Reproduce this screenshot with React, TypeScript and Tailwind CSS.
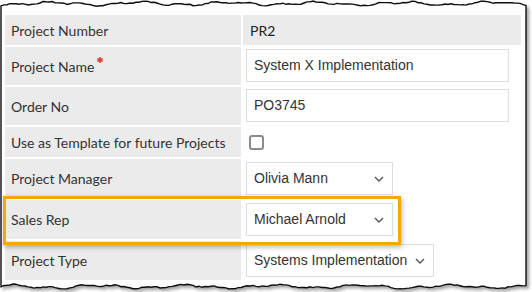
import React from "react";

const rand = (i: number, seed: number) => {
  const v = Math.sin(i * 12.9898 + seed * 78.233) * 43758.5453;
  return v - Math.floor(v);
};

const edgeY = (x: number, base: number, seed: number) =>
  base + 1.3 * Math.sin(x / 14 + seed) + 0.9 * Math.sin(x / 5.3 + seed * 2) + rand(x, seed) * 1.2;

const framePath = () => {
  const top: string[] = [];
  const bottom: string[] = [];
  for (let x = 1; x <= 526; x += 3) {
    top.push(`${x},${edgeY(x, 3, 1).toFixed(1)}`);
    bottom.push(`${x},${edgeY(x, 286, 4).toFixed(1)}`);
  }
  top.push(`526,${edgeY(526, 3, 1).toFixed(1)}`);
  bottom.push(`526,285`);
  return `M${top.join(" L")} L${bottom.reverse().join(" L")} Z`;
};

const Chevron = () => (
  <svg width="10" height="6" viewBox="0 0 10 6" className="shrink-0">
    <polyline points="1,1 5,5 9,1" fill="none" stroke="#555" strokeWidth="1.4" />
  </svg>
);

const Required = () => (
  <svg width="6" height="6" viewBox="0 0 6 6" className="ml-[3px] -mt-[12px]">
    <g stroke="#e0403a" strokeWidth="1.7" strokeLinecap="round">
      <line x1="3" y1="0.8" x2="3" y2="5.2" />
      <line x1="1" y1="1.9" x2="5" y2="4.1" />
      <line x1="1" y1="4.1" x2="5" y2="1.9" />
    </g>
  </svg>
);

const TextInput = ({ value }: { value: string }) => (
  <div className="ml-[3px] mt-[2px] h-[33px] w-[263px] border border-[#dedede] bg-white flex items-center pl-[7px] text-[14px] text-[#333] font-['Liberation_Sans',Arial,sans-serif]">
    {value}
  </div>
);

const Select = ({ value, width }: { value: string; width: string }) => (
  <div
    className={`ml-[3px] mt-[3px] h-[33px] ${width} border border-[#dedede] bg-white flex items-center justify-between pl-[7px] pr-[8px] text-[14px] text-[#333] font-['Liberation_Sans',Arial,sans-serif]`}
  >
    <span>{value}</span>
    <Chevron />
  </div>
);

const Row = ({
  label,
  height,
  children,
  grayValue,
  required,
}: {
  label: string;
  height: string;
  children: React.ReactNode;
  grayValue?: boolean;
  required?: boolean;
}) => (
  <div className={`flex gap-[2px] ${height}`}>
    <div className="w-[236px] bg-[#ebebeb] flex items-center pl-[6px] text-[14px] text-[#333]">
      {label}
      {required && <Required />}
    </div>
    <div className={`flex-1 ${grayValue ? "bg-[#ebebeb] flex items-center pl-[7px] text-[14px] text-[#222]" : ""}`}>
      {children}
    </div>
  </div>
);

export default function App() {
  return (
    <div className="relative w-[532px] h-[292px] bg-white overflow-hidden font-['Lato','Noto_Sans',sans-serif]">
      <svg width="532" height="292" className="absolute inset-0">
        <defs>
          <filter id="sh" x="-5%" y="-5%" width="110%" height="110%">
            <feDropShadow dx="2.5" dy="2.5" stdDeviation="1.6" floodColor="#000" floodOpacity="0.35" />
          </filter>
        </defs>
        <path d={framePath()} fill="#fff" stroke="#111" strokeWidth="1.4" filter="url(#sh)" />
      </svg>

      <div className="relative pt-[15px] pl-[5px] pr-[11px] flex flex-col gap-[2px]">
        <Row label="Project Number" height="h-[30px]" grayValue>
          PR2
        </Row>
        <Row label="Project Name" height="h-[38px]" required>
          <TextInput value="System X Implementation" />
        </Row>
        <Row label="Order No" height="h-[38px]">
          <TextInput value="PO3745" />
        </Row>
        <Row label="Use as Template for future Projects" height="h-[30px]">
          <div className="h-full flex items-center pl-[6px]">
            <div className="w-[15px] h-[15px] rounded-[3px] border-2 border-[#8a8a96] bg-white" />
          </div>
        </Row>
        <Row label="Project Manager" height="h-[39px]">
          <Select value="Olivia Mann" width="w-[147px]" />
        </Row>
        <Row label="Sales Rep" height="h-[39px]">
          <Select value="Michael Arnold" width="w-[147px]" />
        </Row>
        <Row label="Project Type" height="h-[39px]">
          <Select value="Systems Implementation" width="w-[188px]" />
        </Row>
      </div>

      <div className="absolute left-[3px] top-[196px] w-[398px] h-[49px] border-[3px] border-[#f6a800] shadow-[1px_2px_5px_rgba(0,0,0,0.3)]" />
    </div>
  );
}
